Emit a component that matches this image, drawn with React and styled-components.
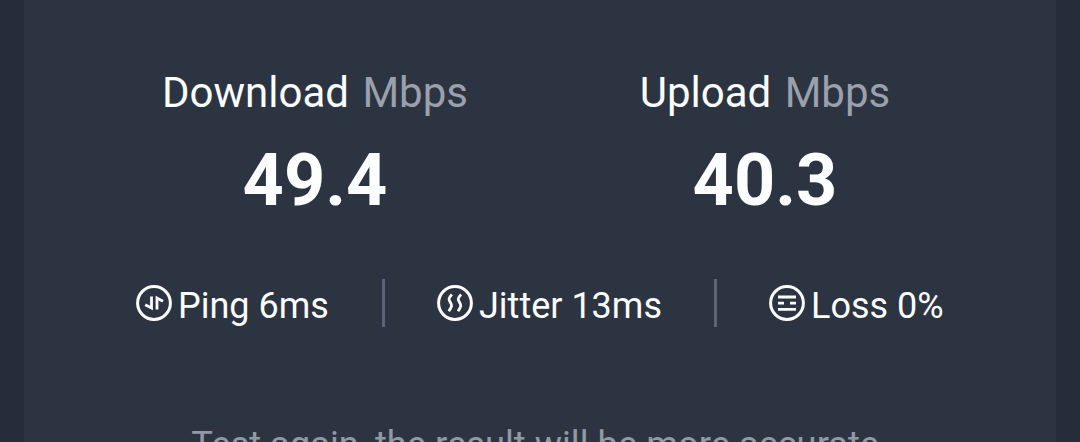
import React from "react";
import styled, { createGlobalStyle } from "styled-components";

const GlobalStyle = createGlobalStyle`
  * { box-sizing: border-box; }
  body { margin: 0; background: #252d3a; overflow: hidden; }
`;

const Screen = styled.div`
  height: 442px;
  padding: 0 24px;
  overflow: hidden;
  background: #252d3a;
  color: #fcfeff;
  font-family: Roboto, sans-serif;
  white-space: nowrap;
`;

const Panel = styled.main`
  height: 442px;
  padding: 68px 66px 0;
  overflow: hidden;
  background: #2d3441;
  display: flex;
  flex-direction: column;
`;

const Speeds = styled.section`
  display: grid;
  grid-template-columns: 1fr 1fr;
`;

const Speed = styled.div`
  display: flex;
  flex-direction: column;
  align-items: center;
`;

const SpeedLabel = styled.div`
  font-size: 42px;
  line-height: 50px;
`;

const Unit = styled.span`
  margin-left: 3px;
  color: #9aa1ad;
`;

const SpeedValue = styled.div`
  margin-top: 21px;
  font-size: 72px;
  line-height: 84px;
  font-weight: 700;
`;

const Metrics = styled.section`
  margin-top: 56px;
  height: 48px;
  padding-left: 46px;
  display: flex;
  align-items: center;
`;

const Metric = styled.div`
  display: flex;
  align-items: center;
  gap: 6px;
  width: ${(p) => p.$width}px;
`;

const MetricText = styled.span`
  font-size: 36px;
  line-height: 42px;
  padding-top: 5px;
`;

const MetricIcon = styled.svg`
  flex: none;
  width: 36px;
  height: 36px;
  fill: none;
  stroke: currentColor;
  stroke-width: 2.8;
`;

const Divider = styled.div`
  width: 3px;
  height: 48px;
  margin-right: 52px;
  background: #5c6577;
`;

const Footnote = styled.p`
  margin: 97px 0 0;
  text-align: center;
  font-size: 36.3px;
  line-height: 42px;
  color: #9299a5;
`;

const PingIcon = () => (
  <MetricIcon viewBox="0 0 36 36">
    <circle cx="18" cy="18" r="16.4" strokeWidth="3" />
    <path d="M15.5 11.5V23L9.2 19.8M21 24.6V13L27 16.2" />
  </MetricIcon>
);

const JitterIcon = () => (
  <MetricIcon viewBox="0 0 36 36">
    <circle cx="18" cy="18" r="16.4" strokeWidth="3" />
    <path d="M14.9 9.5C11 13.6 11.6 14.6 13.4 17.5S15.2 21 11.8 26.3M24.1 9.5C20.2 13.6 20.8 14.6 22.6 17.5S24.4 21 21 26.3" />
  </MetricIcon>
);

const LossIcon = () => (
  <MetricIcon viewBox="0 0 36 36">
    <circle cx="18" cy="18" r="16.4" strokeWidth="3" />
    <path d="M9 12H27M9 18.1H15M21 18.1H27M9 24.3H27" />
  </MetricIcon>
);

export default function App() {
  return (
    <Screen>
      <GlobalStyle />
      <Panel>
        <Speeds>
          <Speed>
            <SpeedLabel>Download <Unit>Mbps</Unit></SpeedLabel>
            <SpeedValue>49.4</SpeedValue>
          </Speed>
          <Speed>
            <SpeedLabel>Upload <Unit>Mbps</Unit></SpeedLabel>
            <SpeedValue>40.3</SpeedValue>
          </Speed>
        </Speeds>
        <Metrics>
          <Metric $width={246}><PingIcon /><MetricText>Ping 6ms</MetricText></Metric>
          <Divider />
          <Metric $width={277}><JitterIcon /><MetricText>Jitter 13ms</MetricText></Metric>
          <Divider />
          <Metric $width={180}><LossIcon /><MetricText>Loss 0%</MetricText></Metric>
        </Metrics>
        <Footnote>Test again, the result will be more accurate.</Footnote>
      </Panel>
    </Screen>
  );
}
